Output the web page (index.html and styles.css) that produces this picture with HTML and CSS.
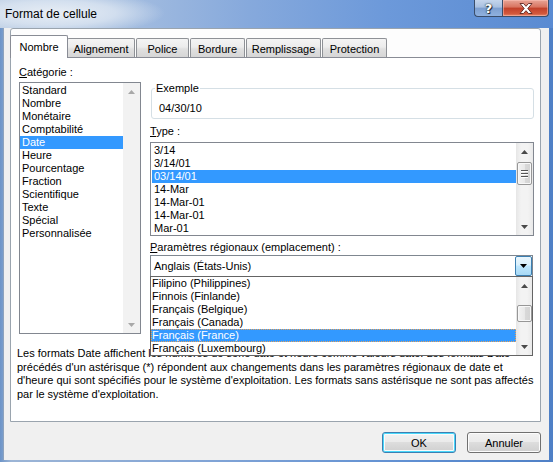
FILE: index.html
```html
<!DOCTYPE html>
<html lang="fr">
<head>
<meta charset="utf-8">
<title>Format de cellule</title>
<link rel="stylesheet" href="styles.css">
</head>
<body>
<div class="window">
  <div class="titlebar">
    <span class="title">Format de cellule</span>
    <div class="caption">
      <div class="cbtn cbtn-help">?</div>
      <div class="cbtn cbtn-close">
        <svg width="14" height="11" viewBox="0 0 14 11"><path d="M1 0.5 H4.5 L7 3.3 L9.5 0.5 H13 L8.8 5.5 L13 10.5 H9.5 L7 7.7 L4.5 10.5 H1 L5.2 5.5 Z" fill="#fff" stroke="#5b2520" stroke-width="0.9"/></svg>
      </div>
    </div>
  </div>
  <div class="client">
    <div class="tabbox">
      <div class="tabs">
        <div class="tab tab-sel tw-nombre">Nombre</div>
        <div class="tab tw-align">Alignement</div>
        <div class="tab tw-police">Police</div>
        <div class="tab tw-bordure">Bordure</div>
        <div class="tab tw-rempl">Remplissage</div>
        <div class="tab tw-prot">Protection</div>
      </div>
      <div class="panel">
        <div class="cols">
          <div class="leftcol">
            <div class="label"><u>C</u>atégorie :</div>
            <div class="listbox catlist">
              <div class="items">
                <div class="item">Standard</div>
                <div class="item">Nombre</div>
                <div class="item">Monétaire</div>
                <div class="item">Comptabilité</div>
                <div class="item item-sel">Date</div>
                <div class="item">Heure</div>
                <div class="item">Pourcentage</div>
                <div class="item">Fraction</div>
                <div class="item">Scientifique</div>
                <div class="item">Texte</div>
                <div class="item">Spécial</div>
                <div class="item">Personnalisée</div>
              </div>
              <div class="vscroll vscroll-off">
                <div class="sarrow"><svg width="7" height="4" viewBox="0 0 7 4"><path d="M0 4 L3.5 0 L7 4 Z"/></svg></div>
                <div class="strack"></div>
                <div class="sarrow"><svg width="7" height="4" viewBox="0 0 7 4"><path d="M0 0 L3.5 4 L7 0 Z"/></svg></div>
              </div>
            </div>
          </div>
          <div class="rightcol">
            <fieldset class="group">
              <legend>Exemple</legend>
              <div class="sample">04/30/10</div>
            </fieldset>
            <div class="label label-type"><u>T</u>ype :</div>
            <div class="listbox typelist">
              <div class="items">
                <div class="item">3/14</div>
                <div class="item">3/14/01</div>
                <div class="item item-sel">03/14/01</div>
                <div class="item">14-Mar</div>
                <div class="item">14-Mar-01</div>
                <div class="item">14-Mar-01</div>
                <div class="item">Mar-01</div>
              </div>
              <div class="vscroll">
                <div class="sarrow"><svg width="7" height="4" viewBox="0 0 7 4"><path d="M0 4 L3.5 0 L7 4 Z"/></svg></div>
                <div class="strack">
                  <div class="thumb thumb-type">
                    <span class="grip"></span><span class="grip"></span><span class="grip"></span>
                  </div>
                </div>
                <div class="sarrow"><svg width="7" height="4" viewBox="0 0 7 4"><path d="M0 0 L3.5 4 L7 0 Z"/></svg></div>
              </div>
            </div>
            <div class="label label-param"><u>P</u>aramètres régionaux (emplacement) :</div>
            <div class="combo-wrap">
              <div class="combo">
                <span class="combo-text">Anglais (États-Unis)</span>
                <div class="dropbtn"><svg width="7" height="4" viewBox="0 0 7 4"><path d="M0 0 L3.5 4 L7 0 Z"/></svg></div>
              </div>
              <div class="dropdown">
                <div class="items">
                  <div class="item">Filipino (Philippines)</div>
                  <div class="item">Finnois (Finlande)</div>
                  <div class="item">Français (Belgique)</div>
                  <div class="item">Français (Canada)</div>
                  <div class="item item-sel item-focus">Français (France)</div>
                  <div class="item">Français (Luxembourg)</div>
                </div>
                <div class="vscroll vscroll-drop">
                  <div class="sarrow"><svg width="7" height="4" viewBox="0 0 7 4"><path d="M0 4 L3.5 0 L7 4 Z"/></svg></div>
                  <div class="strack">
                    <div class="thumb thumb-drop"></div>
                  </div>
                  <div class="sarrow"><svg width="7" height="4" viewBox="0 0 7 4"><path d="M0 0 L3.5 4 L7 0 Z"/></svg></div>
                </div>
              </div>
            </div>
          </div>
        </div>
        <p class="helptext">Les formats Date affichent les numéros de série date et heure comme valeurs date. Les formats Date précédés d'un astérisque (*) répondent aux changements dans les paramètres régionaux de date et d'heure qui sont spécifiés pour le système d'exploitation. Les formats sans astérisque ne sont pas affectés par le système d'exploitation.</p>
      </div>
    </div>
    <div class="buttons">
      <div class="btn btn-default">OK</div>
      <div class="btn">Annuler</div>
    </div>
  </div>
</div>
</body>
</html>
```
FILE: styles.css
```css
* { box-sizing: border-box; }
html, body { margin: 0; padding: 0; }
body {
  width: 553px;
  height: 462px;
  overflow: hidden;
  font-family: "Liberation Sans", Arial, sans-serif;
  font-size: 11px;
  color: #000;
}
.window {
  width: 553px;
  height: 462px;
  display: flex;
  flex-direction: column;
  background: linear-gradient(to right, #6d94c8 0%, #9cb5d6 2%, #7fa3d6 40%, #5f8fd2 75%, #4f80c6 100%);
}
.titlebar {
  height: 28px;
  display: flex;
  align-items: flex-start;
  background:
    radial-gradient(ellipse 110px 22px at 55px 13px, rgba(235,240,246,0.95) 0%, rgba(220,230,242,0.8) 55%, rgba(220,230,242,0) 100%),
    linear-gradient(to right, #b9cbe2 0%, #a7bfe0 20%, #86a9dc 45%, #6c99da 70%, #5a8bd2 100%);
}
.title {
  font-size: 12px;
  padding: 7px 0 0 5px;
  color: #000;
  line-height: 14px;
}
.caption {
  margin-left: auto;
  margin-right: 4px;
  display: flex;
  height: 17px;
}
.cbtn {
  height: 17px;
  border: 1px solid #3a4d6a;
  border-top: none;
  display: flex;
  align-items: center;
  justify-content: center;
}
.cbtn-help {
  width: 28px;
  border-radius: 0 0 0 4px;
  border-right: none;
  background: linear-gradient(#c4d5ec 0%, #a9c0e0 45%, #7d9fd0 50%, #8fb1df 100%);
  color: #fff;
  font-weight: bold;
  font-size: 13px;
  font-family: "DejaVu Sans", sans-serif;
  text-shadow: 0 0 1px #233, 0 0 2px #233, 1px 1px 0 #334;
}
.cbtn-close {
  width: 47px;
  border-radius: 0 0 4px 0;
  background: linear-gradient(#e8a597 0%, #d8735f 45%, #c1402a 50%, #d2583c 85%, #e0876a 100%);
  box-shadow: inset 0 0 0 1px rgba(255,200,190,0.5);
}
.client {
  flex: 1;
  margin: 0 4px 2px 3px;
  background: #f0f0f0;
  padding: 0 8px 0 7px;
  display: flex;
  flex-direction: column;
  border-left: 1px solid #8da2bd;
}
.tabbox {
  height: 394px;
  border: 1px solid #9aa4ae;
  border-radius: 3px 3px 0 0;
  background: #fdfdfd;
  display: flex;
  flex-direction: column;
  margin-left: -1px;
}
.tabs {
  margin-top: 6px;
  height: 22px;
  display: flex;
  align-items: flex-end;
  margin-left: -1px;
  position: relative;
  z-index: 2;
}
.tab {
  height: 19px;
  border: 1px solid #8e9196;
  border-bottom: none;
  border-radius: 2px 2px 0 0;
  background: linear-gradient(#f4f4f4 0%, #ececec 45%, #e0e0e0 55%, #d6d6d6 100%);
  display: flex;
  align-items: center;
  justify-content: center;
  margin-right: 1px;
  padding-top: 1px;
}
.tab-sel {
  height: 23px;
  margin-bottom: -1px;
  background: #fff;
  border-color: #898c95;
  margin-right: -1px;
  position: relative;
  z-index: 3;
  padding-top: 0;
}
.tw-nombre { width: 58px; }
.tw-align { width: 68px; }
.tw-police { width: 53px; }
.tw-bordure { width: 55px; }
.tw-rempl { width: 75px; }
.tw-prot { width: 65px; }
.panel {
  flex: 1;
  border-top: 1px solid #898c95;
  background: #fff;
  display: flex;
  flex-direction: column;
}
.cols {
  display: flex;
  padding-left: 8px;
}
.leftcol {
  width: 122px;
  padding-top: 8px;
}
.rightcol {
  width: 384px;
  margin-left: 9px;
  padding-top: 24px;
}
.label {
  height: 13px;
  line-height: 13px;
}
.label u { text-decoration: underline; text-underline-offset: 1px; }
.listbox {
  border: 1px solid #828790;
  background: #fff;
  display: flex;
}
.catlist {
  margin-top: 3px;
  height: 252px;
}
.items {
  flex: 1;
  padding-top: 1px;
}
.item {
  height: 13px;
  line-height: 13px;
  padding-left: 2px;
  white-space: nowrap;
}
.item-sel {
  background: #3399ff;
  color: #fff;
}
.catlist .item { padding-left: 2px; }
.vscroll {
  width: 17px;
  display: flex;
  flex-direction: column;
  background: linear-gradient(to right, #e6e6e6, #f3f3f3 30%, #f3f3f3 70%, #e9e9e9);
}
.sarrow {
  height: 17px;
  display: flex;
  align-items: center;
  justify-content: center;
}
.sarrow svg path { fill: #4a4a4a; }
.vscroll-off .sarrow svg path { fill: #a8a8a8; }
.vscroll-off { background: #f2f2f2; }
.strack { flex: 1; }
.thumb {
  margin: 2px 0 0 1px;
  width: 15px;
  border: 1px solid #979797;
  border-radius: 2px;
  background: linear-gradient(to right, #f3f3f3, #e8e8e8 50%, #d9d9d9 51%, #d3d3d3);
  box-shadow: inset 0 0 0 1px #f8f8f8;
  display: flex;
  flex-direction: column;
  align-items: center;
  justify-content: center;
  gap: 2px;
}
.thumb-type { height: 23px; }
.thumb-drop { height: 17px; margin-top: 11px; }
.grip {
  width: 7px;
  height: 1px;
  background: #555;
  box-shadow: 0 1px 0 #fff;
}
.group {
  margin: 0;
  padding: 7px 7px 3px 7px;
  border: 1px solid #d5dfe5;
  border-radius: 3px;
  min-width: 0;
  width: 383px;
  margin-left: 1px;
}
.group legend {
  padding: 0 1px;
  margin-left: -4px;
  line-height: 13px;
  height: 13px;
}
.sample {
  height: 13px;
  line-height: 13px;
}
.label-type { margin-top: 6px; }
.typelist {
  margin-top: 4px;
  height: 94px;
}
.typelist .items { padding-left: 1px; }
.label-param { margin-top: 5px; }
.combo-wrap {
  position: relative;
  margin-top: 1px;
  width: 383px;
}
.combo {
  height: 22px;
  border: 1px solid #7f8790;
  background: #fff;
  display: flex;
  align-items: center;
}
.combo-text {
  flex: 1;
  padding-left: 3px;
}
.dropbtn {
  width: 17px;
  height: 20px;
  border: 1px solid #3c7fb1;
  border-radius: 2px;
  background: linear-gradient(#eaf6fd 0%, #d9f0fc 45%, #bee6fd 50%, #a7d9f5 100%);
  display: flex;
  align-items: center;
  justify-content: center;
}
.dropbtn svg path { fill: #000; }
.dropdown {
  position: absolute;
  left: 0;
  right: 0;
  top: 21px;
  height: 80px;
  border: 1px solid #646464;
  background: #fff;
  display: flex;
  z-index: 5;
}
.dropdown .items { padding-top: 0; }
.dropdown .item { padding-left: 1px; }
.item-focus { outline: 1px dotted #e8a25a; outline-offset: -1px; }
.vscroll-drop { width: 16px; }
.helptext {
  margin: 13px 0 0 6px;
  width: 520px;
  line-height: 13.67px;
}
.buttons {
  margin-top: 10px;
  display: flex;
  justify-content: flex-end;
  gap: 11px;
}
.btn {
  width: 74px;
  height: 21px;
  border: 1px solid #707070;
  border-radius: 3px;
  background: linear-gradient(#f2f2f2 0%, #ebebeb 45%, #dddddd 50%, #cfcfcf 100%);
  box-shadow: inset 0 0 0 1px #fcfcfc;
  display: flex;
  align-items: center;
  justify-content: center;
}
.btn-default {
  border-color: #3c7fb1;
  box-shadow: inset 0 0 0 1px #48d8fb, inset 0 0 0 2px #fafafa;
}
```
